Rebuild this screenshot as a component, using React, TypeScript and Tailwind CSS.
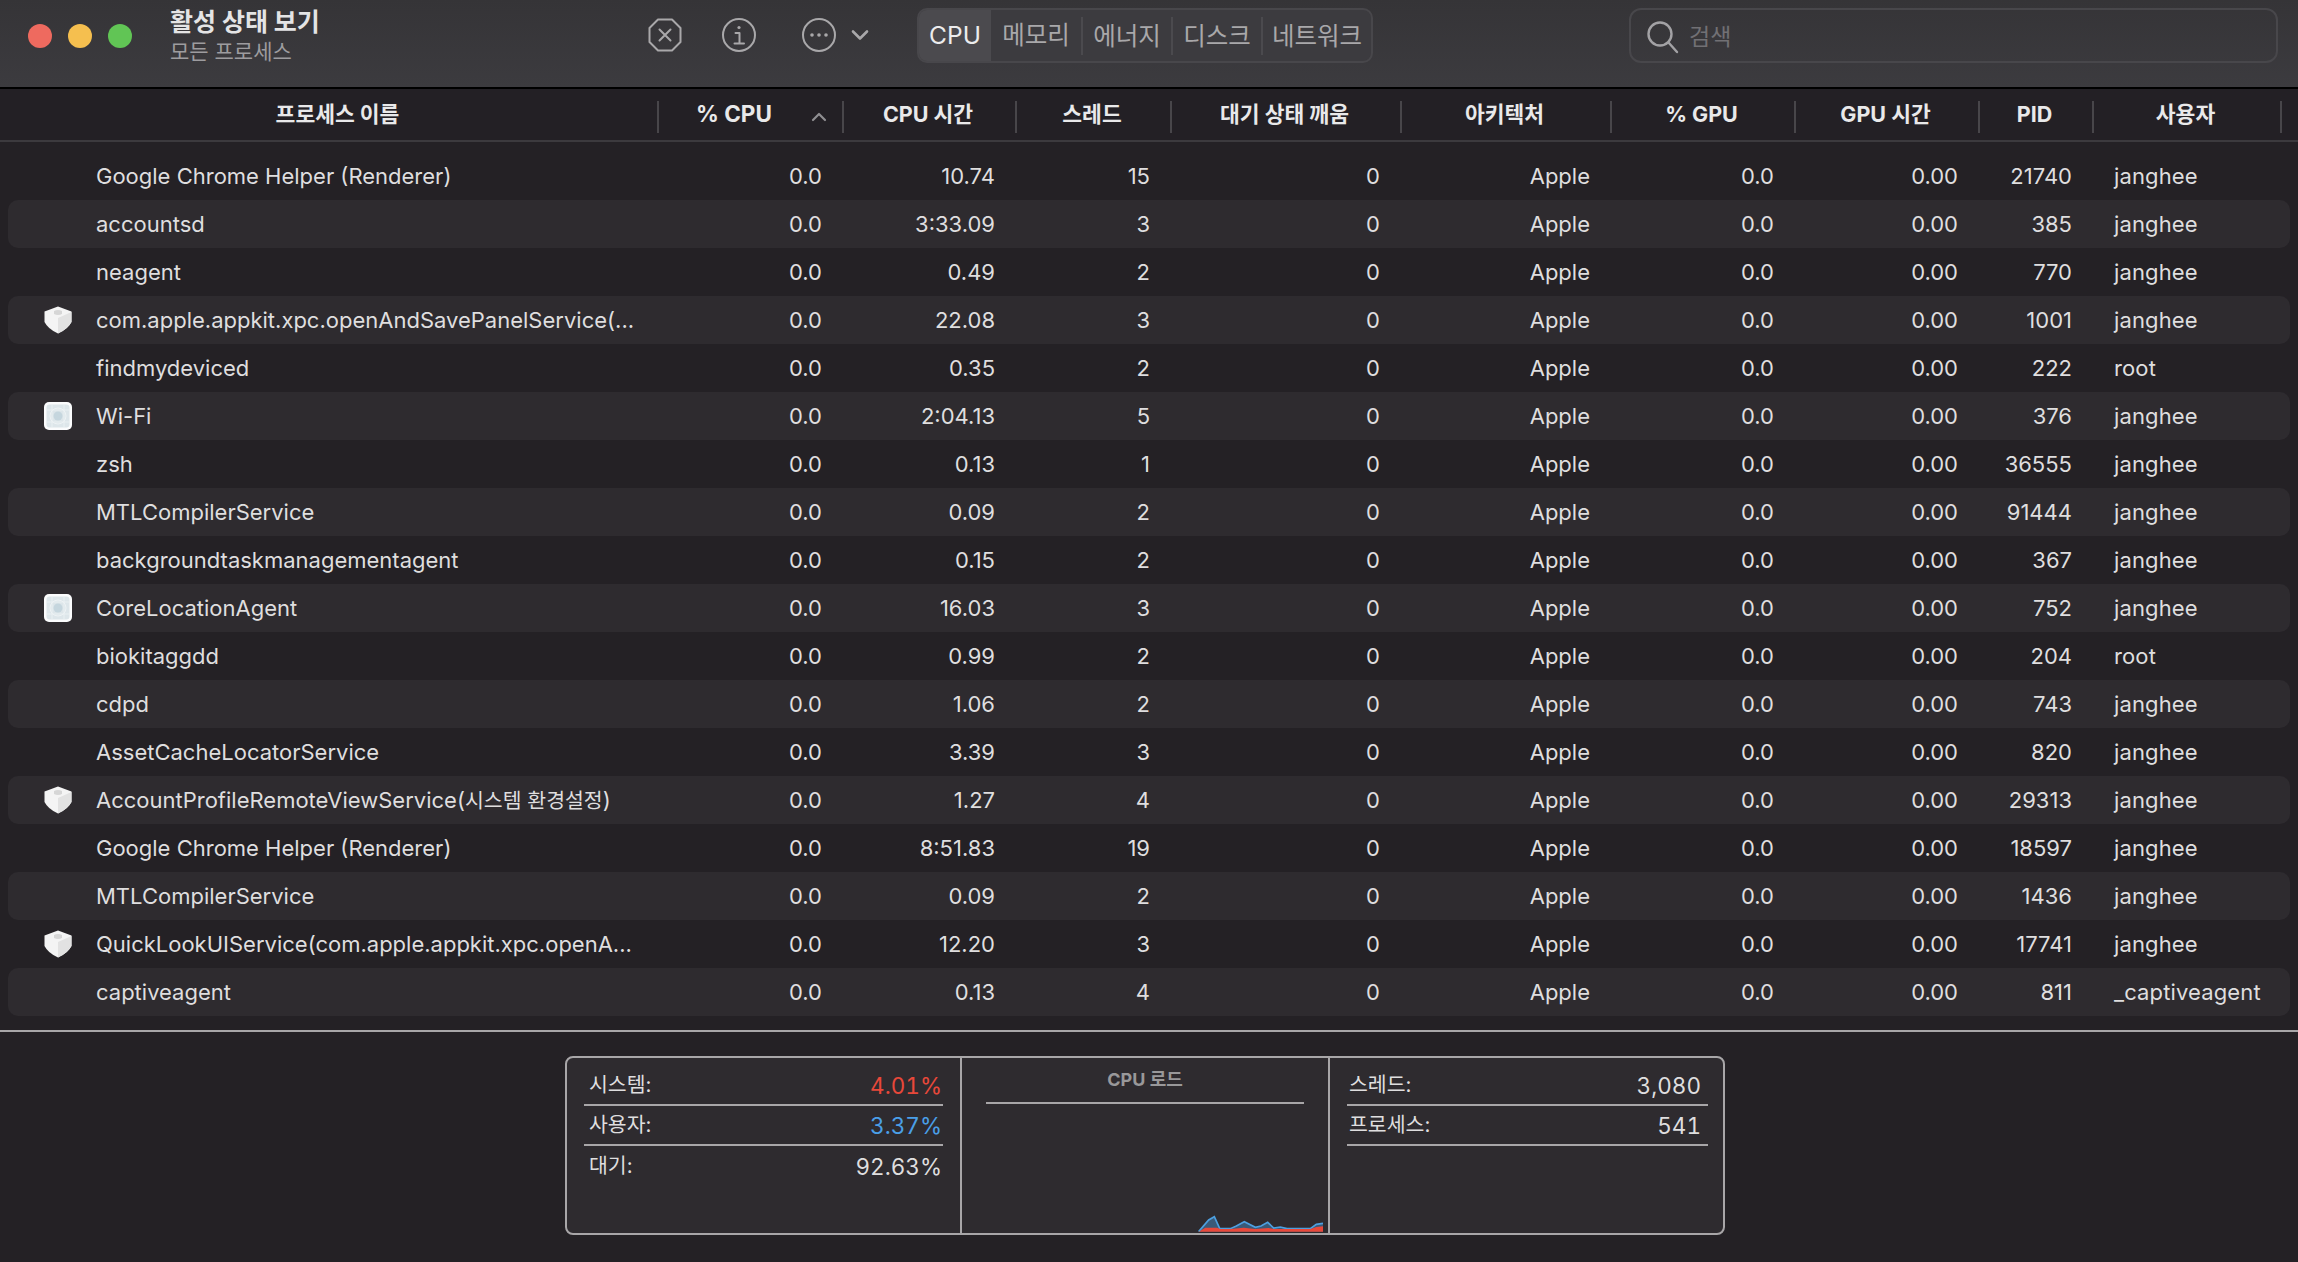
const FONT = "font-['Inter','Noto_Sans_CJK_KR',sans-serif]";

const rows: string[][] = [
  ["Google Chrome Helper (Renderer)", "10.74", "15", "21740", "janghee"],
  ["accountsd", "3:33.09", "3", "385", "janghee"],
  ["neagent", "0.49", "2", "770", "janghee"],
  ["com.apple.appkit.xpc.openAndSavePanelService(...", "22.08", "3", "1001", "janghee", "shield"],
  ["findmydeviced", "0.35", "2", "222", "root"],
  ["Wi-Fi", "2:04.13", "5", "376", "janghee", "app"],
  ["zsh", "0.13", "1", "36555", "janghee"],
  ["MTLCompilerService", "0.09", "2", "91444", "janghee"],
  ["backgroundtaskmanagementagent", "0.15", "2", "367", "janghee"],
  ["CoreLocationAgent", "16.03", "3", "752", "janghee", "app"],
  ["biokitaggdd", "0.99", "2", "204", "root"],
  ["cdpd", "1.06", "2", "743", "janghee"],
  ["AssetCacheLocatorService", "3.39", "3", "820", "janghee"],
  ["AccountProfileRemoteViewService(|시스템 환경설정|)", "1.27", "4", "29313", "janghee", "shield"],
  ["Google Chrome Helper (Renderer)", "8:51.83", "19", "18597", "janghee"],
  ["MTLCompilerService", "0.09", "2", "1436", "janghee"],
  ["QuickLookUIService(com.apple.appkit.xpc.openA...", "12.20", "3", "17741", "janghee", "shield"],
  ["captiveagent", "0.13", "4", "811", "_captiveagent"],
];

const GRID = "grid grid-cols-[650px_185px_173px_155px_230px_210px_184px_184px_114px_188px_9px]";

function Shield() {
  return (
    <svg width="28" height="28" viewBox="0 0 28 28" className="shrink-0">
      <path d="M14 0.5 L27.5 5.5 L27.5 16 Q24 23 14 27.5 Q4 23 0.5 16 L0.5 5.5 Z" fill="#f4f4f4" />
      <path d="M14 12 L27.5 6 L27.5 16 Q24 23 14 27.5 Z" fill="#e2e2e2" />
      <path d="M10 5 Q14 3 18 5 L18 8 Q14 10 10 8 Z" fill="#d6d6d6" />
    </svg>
  );
}

function AppIcon() {
  return (
    <svg width="28" height="28" viewBox="0 0 28 28" className="shrink-0">
      <rect width="28" height="28" rx="5" fill="#fbfcfd" />
      <rect x="2.5" y="2.5" width="23" height="23" rx="3" fill="#dde6ea" />
      <circle cx="14" cy="14" r="4.5" fill="#c5d6de" />
      <circle cx="14" cy="14" r="8" fill="none" stroke="#eef3f5" strokeWidth="1" />
      <path d="M3 8H25M3 20H25M8 3V25M20 3V25" stroke="#eef3f5" strokeWidth="0.8" />
    </svg>
  );
}

function Toolbar() {
  return (
    <div className="h-[89px] shrink-0 flex border-b-2 border-black bg-gradient-to-b from-[#353437] to-[#3c3b3f]">
      <div className="flex items-start gap-4 pl-7 pt-6 w-[169px] shrink-0">
        <span className="w-6 h-6 rounded-full bg-[#ee6a5f]" />
        <span className="w-6 h-6 rounded-full bg-[#f5bf4f]" />
        <span className="w-6 h-6 rounded-full bg-[#61c555]" />
      </div>
      <div className="w-[478px] shrink-0 pt-[5px] pl-[1px]">
        <div className="text-[25px] leading-[34px] font-bold text-[#e4e4e5]">활성 상태 보기</div>
        <div className="text-[21px] leading-[26px] text-[#9d9c9f]">모든 프로세스</div>
      </div>
      <div className="flex items-start pt-[17px] text-[#a9a8aa] w-[270px] shrink-0">
        <svg width="36" height="36" viewBox="0 0 36 36" fill="none" stroke="currentColor" strokeWidth="2" className="shrink-0">
          <path d="M11 2.5H25L33.5 11V25L25 33.5H11L2.5 25V11Z" strokeLinejoin="round" />
          <path d="M12.5 12.5L23.5 23.5M23.5 12.5L12.5 23.5" strokeLinecap="round" />
        </svg>
        <svg width="36" height="36" viewBox="0 0 36 36" fill="none" stroke="currentColor" strokeWidth="2" className="shrink-0 ml-[38px]">
          <circle cx="18" cy="18" r="16" />
          <circle cx="18" cy="10.5" r="1.6" fill="currentColor" stroke="none" />
          <path d="M14.5 16H18.5V26M13.5 26.5H23" strokeLinecap="round" strokeLinejoin="round" />
        </svg>
        <svg width="36" height="36" viewBox="0 0 36 36" fill="none" stroke="currentColor" strokeWidth="2" className="shrink-0 ml-[44px]">
          <circle cx="18" cy="18" r="16" />
          <circle cx="11" cy="18" r="1.8" fill="currentColor" stroke="none" />
          <circle cx="18" cy="18" r="1.8" fill="currentColor" stroke="none" />
          <circle cx="25" cy="18" r="1.8" fill="currentColor" stroke="none" />
        </svg>
        <svg width="18" height="12" viewBox="0 0 18 12" fill="none" stroke="currentColor" strokeWidth="2.6" className="shrink-0 ml-[14px] mt-[12px]">
          <path d="M2 2.5L9 9.5L16 2.5" strokeLinecap="round" strokeLinejoin="round" />
        </svg>
      </div>
      <div className="w-[456px] h-[55px] mt-2 shrink-0 flex rounded-[10px] border-2 border-[#48474b] bg-[#3c3b3f] items-center text-[24.5px] text-[#a9a8aa] overflow-hidden">
        <div className="w-[72px] h-full bg-[#4b4a4e] text-[#ececed] flex items-center justify-center">CPU</div>
        <div className="w-[90px] text-center">메모리</div>
        <div className="w-[90px] h-[38px] leading-[38px] text-center border-l-2 border-[#4b4a4e]">에너지</div>
        <div className="w-[90px] h-[38px] leading-[38px] text-center border-l-2 border-[#4b4a4e]">디스크</div>
        <div className="w-[110px] h-[38px] leading-[38px] text-center border-l-2 border-[#4b4a4e]">네트워크</div>
      </div>
      <div className="w-[649px] h-[55px] mt-2 ml-[256px] shrink-0 flex items-center gap-[9px] rounded-[12px] border-2 border-[#48474b] pl-[15px]">
        <svg width="34" height="34" viewBox="0 0 34 34" fill="none" stroke="#a3a2a5" strokeWidth="2.4" className="shrink-0 mt-[2px]">
          <circle cx="14" cy="14" r="11.5" />
          <path d="M22.5 22.5L31 32" strokeLinecap="round" />
        </svg>
        <span className="text-[23px] text-[#717074] mt-[3px]">검색</span>
      </div>
    </div>
  );
}

function Head({ label, sep = true, shift = "pr-[3px]" }: { label: string; sep?: boolean; shift?: string }) {
  return (
    <div className={`h-[32px] flex items-center justify-center pb-[5px] text-[21.5px] font-bold text-[#e9e9ea] ${shift} ${sep ? "border-l-2 border-[#48464a]" : ""}`}>
      {label}
    </div>
  );
}

function TableHeader() {
  return (
    <div className={`${GRID} items-center h-[53px] shrink-0 pl-[7px] pr-2 pt-[4px] border-b-2 border-[#3c3a3e] bg-[#232025]`}>
      <Head label="프로세스 이름" sep={false} shift="pl-[11px]" />
      <div className="relative h-[32px] flex items-center pl-[37px] pb-[5px] text-[22.5px] font-bold text-[#e9e9ea] border-l-2 border-[#48464a]">
        % CPU
        <svg width="16" height="10" viewBox="0 0 16 10" fill="none" stroke="#8f8e91" strokeWidth="2.2" className="absolute right-[15px] top-[11px]">
          <path d="M2 8L8 2L14 8" strokeLinecap="round" strokeLinejoin="round" />
        </svg>
      </div>
      <Head label="CPU 시간" />
      <Head label="스레드" />
      <Head label="대기 상태 깨움" />
      <Head label="아키텍처" />
      <Head label="% GPU" />
      <Head label="GPU 시간" />
      <Head label="PID" />
      <Head label="사용자" />
      <div className="h-[32px] border-l-2 border-[#48464a]" />
    </div>
  );
}

function Name({ text }: { text: string }) {
  const [a, ko, b] = text.split("|");
  return (
    <span className="whitespace-nowrap">
      {a}
      {ko && <span className="text-[20.5px]">{ko}</span>}
      {b}
    </span>
  );
}

function ProcessRow({ r, i }: { r: string[]; i: number }) {
  const cell = "text-right pr-[21px]";
  return (
    <div className={`${GRID} mx-2 h-[48px] items-center rounded-[10px] text-[22px] text-[#dfdedf] ${i % 2 === 1 ? "bg-[#2e2b2f]" : ""}`}>
      <div className="flex items-center">
        <div className="w-[88px] shrink-0 flex justify-center pl-[12px]">
          {r[5] === "shield" && <Shield />}
          {r[5] === "app" && <AppIcon />}
        </div>
        <Name text={r[0]} />
      </div>
      <div className={cell}>0.0</div>
      <div className={cell}>{r[1]}</div>
      <div className={cell}>{r[2]}</div>
      <div className={cell}>0</div>
      <div className={cell}>Apple</div>
      <div className={cell}>0.0</div>
      <div className={cell}>0.00</div>
      <div className={cell}>{r[3]}</div>
      <div className="pl-[21px] whitespace-nowrap tracking-[0.006em]">{r[4]}</div>
      <div />
    </div>
  );
}

function Stat({ label, value, color, first, line = true, inset = "pl-[5px] pr-[1px]" }: { label: string; value?: string; color?: string; first?: boolean; line?: boolean; inset?: string }) {
  return (
    <div className={`flex items-center justify-between ${inset} text-[#dfdedf] ${first ? "h-[48px] pt-[9px]" : "h-[40px] pt-[1px]"} ${line ? "border-b-2 border-[#a8a6a8]" : ""}`}>
      <span className="text-[20.5px]">{label}</span>
      <span className={`text-[22.5px] tabular-nums ${color ?? ""}`}>{value}</span>
    </div>
  );
}

function Chart() {
  return (
    <svg width="125" height="17" viewBox="203 225 375 51" className="self-end mr-[5px] mt-auto mb-[1px]">
      <path d="M205 275L235 240L252 230L268 265L300 266L318 258L342 245L375 262L392 258L412 247L430 264L450 261L470 266L540 266L558 253L578 250V275Z" fill="#3a5a78" />
      <path d="M205 275L235 240L252 230L268 265L300 266L318 258L342 245L375 262L392 258L412 247L430 264L450 261L470 266L540 266L558 253L578 250" fill="none" stroke="#4c9fe0" strokeWidth="5" />
      <path d="M205 275L225 263L260 263L270 267L300 267L340 263L375 267L415 264L430 267L540 267L558 261L578 259V275Z" fill="#e8483a" />
    </svg>
  );
}

function Summary() {
  return (
    <div className="flex-1 border-t-2 border-[#a8a6a8] pt-[24px] pl-[565px]">
      <div className="w-[1160px] h-[179px] flex rounded-[8px] border-2 border-[#a8a6a8] bg-[#2e2b2f]">
        <div className="w-[395px] shrink-0 border-r-2 border-[#a8a6a8] px-[17px]">
          <Stat first label="시스템:" value="4.01%" color="text-[#e8483a]" />
          <Stat label="사용자:" value="3.37%" color="text-[#4a9fe8]" />
          <Stat label="대기:" value="92.63%" line={false} />
        </div>
        <div className="w-[368px] shrink-0 flex flex-col border-r-2 border-[#a8a6a8]">
          <div className="mx-[24px] h-[46px] border-b-2 border-[#a8a6a8] text-center text-[18px] leading-[43px] font-bold text-[#99989a]">CPU 로드</div>
          <Chart />
        </div>
        <div className="flex-1 pl-[17px] pr-[15px]">
          <Stat first inset="pl-[2px] pr-[7px]" label="스레드:" value="3,080" />
          <Stat inset="pl-[2px] pr-[7px]" label="프로세스:" value="541" />
        </div>
      </div>
    </div>
  );
}

export default function App() {
  return (
    <div className={`${FONT} w-[2298px] h-[1262px] overflow-hidden flex flex-col bg-[#242125]`}>
      <Toolbar />
      <TableHeader />
      <div className="pt-[10px] pb-[14px] shrink-0">
        {rows.map((r, i) => (
          <ProcessRow key={i} r={r} i={i} />
        ))}
      </div>
      <Summary />
    </div>
  );
}
